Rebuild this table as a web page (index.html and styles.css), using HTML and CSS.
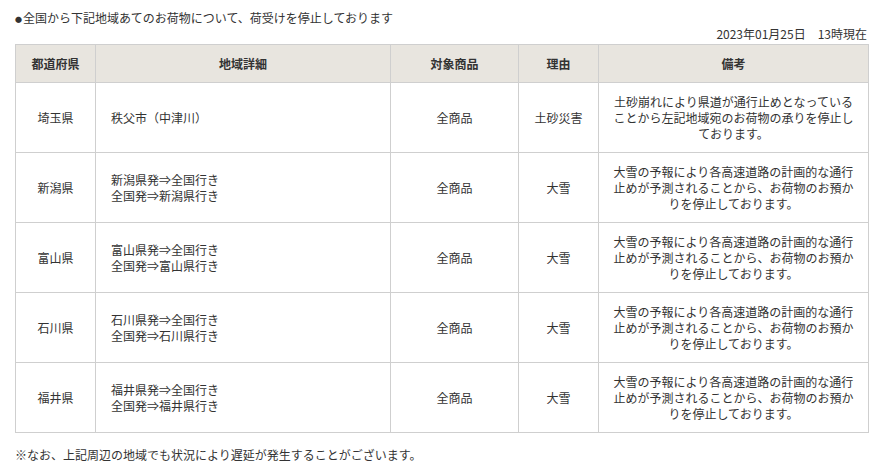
FILE: index.html
```html
<!DOCTYPE html>
<html lang="ja">
<head>
<meta charset="utf-8">
<link rel="stylesheet" href="styles.css">
</head>
<body>
<div class="page">
  <p class="lead"><span class="bullet">●</span>全国から下記地域あてのお荷物について、荷受けを停止しております</p>
  <p class="date">2023年01月25日　13時現在</p>
  <table class="status">
    <colgroup>
      <col class="c-pref">
      <col class="c-area">
      <col class="c-item">
      <col class="c-reason">
      <col class="c-note">
    </colgroup>
    <thead>
      <tr>
        <th>都道府県</th>
        <th>地域詳細</th>
        <th>対象商品</th>
        <th>理由</th>
        <th>備考</th>
      </tr>
    </thead>
    <tbody>
      <tr>
        <td class="center">埼玉県</td>
        <td class="left">秩父市（中津川）</td>
        <td class="center">全商品</td>
        <td class="center">土砂災害</td>
        <td class="center">土砂崩れにより県道が通行止めとなっていることから左記地域宛のお荷物の承りを停止しております。</td>
      </tr>
      <tr>
        <td class="center">新潟県</td>
        <td class="left">新潟県発⇒全国行き<br>全国発⇒新潟県行き</td>
        <td class="center">全商品</td>
        <td class="center">大雪</td>
        <td class="center">大雪の予報により各高速道路の計画的な通行止めが予測されることから、お荷物のお預かりを停止しております。</td>
      </tr>
      <tr>
        <td class="center">富山県</td>
        <td class="left">富山県発⇒全国行き<br>全国発⇒富山県行き</td>
        <td class="center">全商品</td>
        <td class="center">大雪</td>
        <td class="center">大雪の予報により各高速道路の計画的な通行止めが予測されることから、お荷物のお預かりを停止しております。</td>
      </tr>
      <tr>
        <td class="center">石川県</td>
        <td class="left">石川県発⇒全国行き<br>全国発⇒石川県行き</td>
        <td class="center">全商品</td>
        <td class="center">大雪</td>
        <td class="center">大雪の予報により各高速道路の計画的な通行止めが予測されることから、お荷物のお預かりを停止しております。</td>
      </tr>
      <tr>
        <td class="center">福井県</td>
        <td class="left">福井県発⇒全国行き<br>全国発⇒福井県行き</td>
        <td class="center">全商品</td>
        <td class="center">大雪</td>
        <td class="center">大雪の予報により各高速道路の計画的な通行止めが予測されることから、お荷物のお預かりを停止しております。</td>
      </tr>
    </tbody>
  </table>
  <p class="note">※なお、上記周辺の地域でも状況により遅延が発生することがございます。</p>
</div>
</body>
</html>
```

FILE: styles.css
```css
html, body {
  margin: 0;
  padding: 0;
  background: #fff;
}
body {
  font-family: "Noto Sans CJK JP", "Noto Sans", sans-serif;
  font-size: 12px;
  line-height: 16px;
  color: #333;
}
.page {
  width: 852px;
  padding: 10px 0 0 15px;
}
.lead {
  margin: 0;
  height: 16px;
}
.bullet {
  font-size: 7px;
  line-height: 1;
  vertical-align: 1px;
  margin-right: 1px;
}
.date {
  margin: 0 0 2px;
  text-align: right;
}
.status {
  width: 853px;
  border-collapse: collapse;
  table-layout: fixed;
}
.c-pref { width: 80px; }
.c-area { width: 295px; }
.c-item { width: 128px; }
.c-reason { width: 80px; }
.c-note { width: 270px; }
.status th,
.status td {
  border: 1px solid #cfcfcf;
  padding: 0 12px;
  vertical-align: middle;
}
.status th {
  background: #e8e5df;
  font-weight: bold;
  height: 37px;
  text-align: center;
}
.status td {
  height: 69px;
}
.center { text-align: center; }
.status .left { text-align: left; padding-left: 15px; }
.note {
  margin: 14px 0 0;
}
```
